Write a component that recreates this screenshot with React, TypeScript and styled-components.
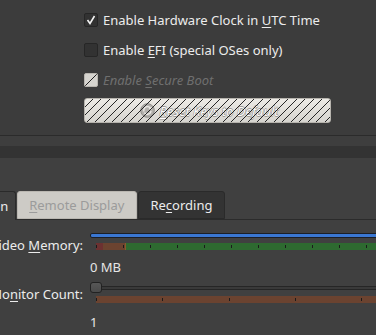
import styled, { createGlobalStyle } from 'styled-components'

const GlobalStyle = createGlobalStyle`
  html, body {
    margin: 0;
    padding: 0;
    background: #404040;
  }
  body {
    font-family: 'Noto Sans', 'DejaVu Sans', sans-serif;
    font-size: 13px;
    color: #ececec;
  }
`

const Window = styled.div`
  display: flex;
  flex-direction: column;
  width: 376px;
  height: 335px;
  overflow: hidden;
  background: #404040;
`

const TopPane = styled.div`
  display: flex;
  flex-direction: column;
  padding: 13px 0 12px 84px;
  background: #3c3c3c;
  border-bottom: 1px solid #2b2b2b;
`

const CheckList = styled.div`
  display: flex;
  flex-direction: column;
  gap: 16px;
`

const CheckRow = styled.label<{ $disabled?: boolean }>`
  display: flex;
  align-items: center;
  gap: 5px;
  height: 14px;
  line-height: 18px;
  white-space: nowrap;
  color: ${({ $disabled }) => ($disabled ? '#6f6f6f' : '#ececec')};
  font-style: ${({ $disabled }) => ($disabled ? 'italic' : 'normal')};
`

// disabled widgets get a diagonal "/" line pattern painted over them
const hatch = (period: number, line = 0.8, color = '#202020') => `repeating-linear-gradient(
  135deg,
  transparent 0 ${period - line}px,
  ${color} ${period - line}px ${period}px
)`

const Box = styled.span<{ $disabled?: boolean }>`
  display: flex;
  align-items: center;
  justify-content: center;
  flex-shrink: 0;
  width: 12px;
  height: 12px;
  border: 1px solid ${({ $disabled }) => ($disabled ? '#b9b6b0' : '#262626')};
  border-radius: 2px;
  background: ${({ $disabled }) =>
    $disabled ? `${hatch(9)}, #d6d4cf` : '#323232'};
`

const Mnemonic = styled.u`
  text-decoration-thickness: 1px;
  text-underline-offset: 2px;
`

const ResetButton = styled.button`
  position: relative;
  display: flex;
  align-items: center;
  justify-content: center;
  gap: 4px;
  width: 247px;
  height: 25px;
  margin-top: 11px;
  padding: 0 0 0 4px;
  border: 1px solid #b7b4ae;
  border-radius: 3px;
  background: linear-gradient(#eceae5, #d6d4cf);
  color: #fbfbfa;
  font-family: inherit;
  font-size: 13px;
  font-style: italic;
  text-shadow:
    0.6px 0 0 #9c9a96,
    -0.6px 0 0 #9c9a96,
    0 0.6px 0 #9c9a96,
    0 -0.6px 0 #9c9a96;

  &::after {
    content: '';
    position: absolute;
    inset: 0;
    border-radius: 2px;
    background: ${hatch(6, 0.7, '#262626')};
  }
`

const BandLight = styled.div`
  height: 10px;
  background: #3e3e3e;
`

const BandDark = styled.div`
  height: 12px;
  background: #333333;
`

const TabBar = styled.div`
  display: flex;
  align-items: flex-end;
  padding-top: 33px;
  margin-left: -46px;
  border-bottom: 1px solid #2b2b2b;
`

const Tab = styled.div<{ $state: 'active' | 'disabled' | 'normal' }>`
  display: flex;
  align-items: center;
  height: ${({ $state }) => ($state === 'active' ? '28px' : '26px')};
  padding: ${({ $state }) => ($state === 'active' ? '0 7px 0 12px' : '0 12px 0 11px')};
  margin-bottom: ${({ $state }) => ($state === 'active' ? '-1px' : '0')};
  margin-right: 1px;
  border: 1px solid ${({ $state }) => ($state === 'disabled' ? '#bab7b1' : '#2a2a2a')};
  border-bottom: ${({ $state }) => ($state === 'active' ? 'none' : undefined)};
  border-radius: 3px 3px 0 0;
  white-space: nowrap;
  background: ${({ $state }) =>
    $state === 'active' ? '#404040' : $state === 'disabled' ? '#cdcbc6' : '#333333'};
  color: ${({ $state }) => ($state === 'disabled' ? '#9b9b9b' : '#ececec')};
`

const Pane = styled.div`
  display: flex;
  flex-direction: column;
  padding-top: 9px;
`

const SettingRow = styled.div<{ $top?: number }>`
  display: flex;
  align-items: flex-start;
  gap: 7px;
  margin-top: ${({ $top }) => $top ?? 0}px;
`

const Label = styled.div<{ $offset: number }>`
  display: flex;
  justify-content: flex-end;
  width: 83px;
  flex-shrink: 0;
  margin-top: ${({ $offset }) => $offset}px;
  line-height: 18px;
  white-space: nowrap;
`

const SliderBlock = styled.div`
  display: flex;
  flex-direction: column;
  gap: 2px;
  width: 320px;
  flex-shrink: 0;
`

const Track = styled.div`
  position: relative;
  display: flex;
  align-items: center;
  height: 12px;
`

const BlueGroove = styled.div`
  flex: 1;
  height: 3px;
  border: 1px solid #1b1f27;
  border-radius: 2px;
  background: #3a77d2;
`

const Groove = styled.div`
  flex: 1;
  height: 2px;
  margin-left: 4px;
  border: 1px solid #262626;
  background: #3a3a3a;
`

const Handle = styled.div`
  position: absolute;
  left: 0;
  top: 0;
  width: 10px;
  height: 9px;
  border: 1px solid #222222;
  border-radius: 3px;
  background: linear-gradient(#575757, #4a4a4a);
`

const TickBar = styled.div<{ $fill: string; $step: number }>`
  position: relative;
  height: 7px;
  margin-left: 6px;
  background: ${({ $fill }) => $fill};

  &::after {
    content: '';
    position: absolute;
    left: 0;
    right: 0;
    top: 2px;
    height: 3px;
    background: repeating-linear-gradient(
      90deg,
      #1b1b1b 0 1px,
      transparent 1px ${({ $step }) => $step}px
    );
  }
`

const Value = styled.div<{ $gap: number }>`
  margin: ${({ $gap }) => $gap}px 0 0 90px;
  line-height: 18px;
  color: #e6e6e6;
`

const Check = () => (
  <svg width='10' height='10' viewBox='0 0 10 10'>
    <polyline points='1.5,5 4,8.5 8.5,1' fill='none' stroke='#f2f2f2' strokeWidth='1.6' />
  </svg>
)

const ResetIcon = () => (
  <svg width='15' height='15' viewBox='0 0 15 15'>
    <circle cx='7.5' cy='7.5' r='6.8' fill='#b3b1ad' stroke='#8c8a86' />
    <path d='M4 8.5 A3.6 3.6 0 0 1 10.8 6' fill='none' stroke='#eeece8' strokeWidth='1.3' />
    <path d='M11 8 A3.6 3.6 0 0 1 4.4 9.6' fill='none' stroke='#eeece8' strokeWidth='1.3' />
    <polyline points='9.2,5.4 11,6.2 11.6,4.3' fill='none' stroke='#eeece8' strokeWidth='1.1' />
  </svg>
)

const memoryFill =
  'linear-gradient(90deg, #6c3131 0 7px, #6b4330 7px 29px, #8a5a2a 29px 30px, #2e6a30 30px)'

const App = () => (
  <Window>
    <GlobalStyle />
    <TopPane>
      <CheckList>
        <CheckRow>
          <Box><Check /></Box>
          <span>Enable Hardware Clock in <Mnemonic>U</Mnemonic>TC Time</span>
        </CheckRow>
        <CheckRow>
          <Box />
          <span>Enable <Mnemonic>E</Mnemonic>FI (special OSes only)</span>
        </CheckRow>
        <CheckRow $disabled>
          <Box $disabled />
          <span>Enable <Mnemonic>S</Mnemonic>ecure Boot</span>
        </CheckRow>
      </CheckList>
      <ResetButton disabled>
        <ResetIcon />
        <span><Mnemonic>R</Mnemonic>eset Keys to Default</span>
      </ResetButton>
    </TopPane>
    <BandLight />
    <BandDark />

    <TabBar>
      <Tab $state='active'><span>Screen</span></Tab>
      <Tab $state='disabled'><span><Mnemonic>R</Mnemonic>emote Display</span></Tab>
      <Tab $state='normal'><span>Re<Mnemonic>c</Mnemonic>ording</span></Tab>
    </TabBar>

    <Pane>
      <SettingRow>
        <Label $offset={7}><span>Video <Mnemonic>M</Mnemonic>emory:</span></Label>
        <SliderBlock>
          <Track>
            <BlueGroove />
          </Track>
          <TickBar $fill={memoryFill} $step={27} />
        </SliderBlock>
      </SettingRow>
      <Value $gap={4}>0 MB</Value>

      <SettingRow $top={6}>
        <Label $offset={3}><span>Mo<Mnemonic>n</Mnemonic>itor Count:</span></Label>
        <SliderBlock>
          <Track>
            <Groove />
            <Handle />
          </Track>
          <TickBar $fill='#6b4330' $step={66.3} />
        </SliderBlock>
      </SettingRow>
      <Value $gap={10}>1</Value>
    </Pane>
  </Window>
)

export default App
